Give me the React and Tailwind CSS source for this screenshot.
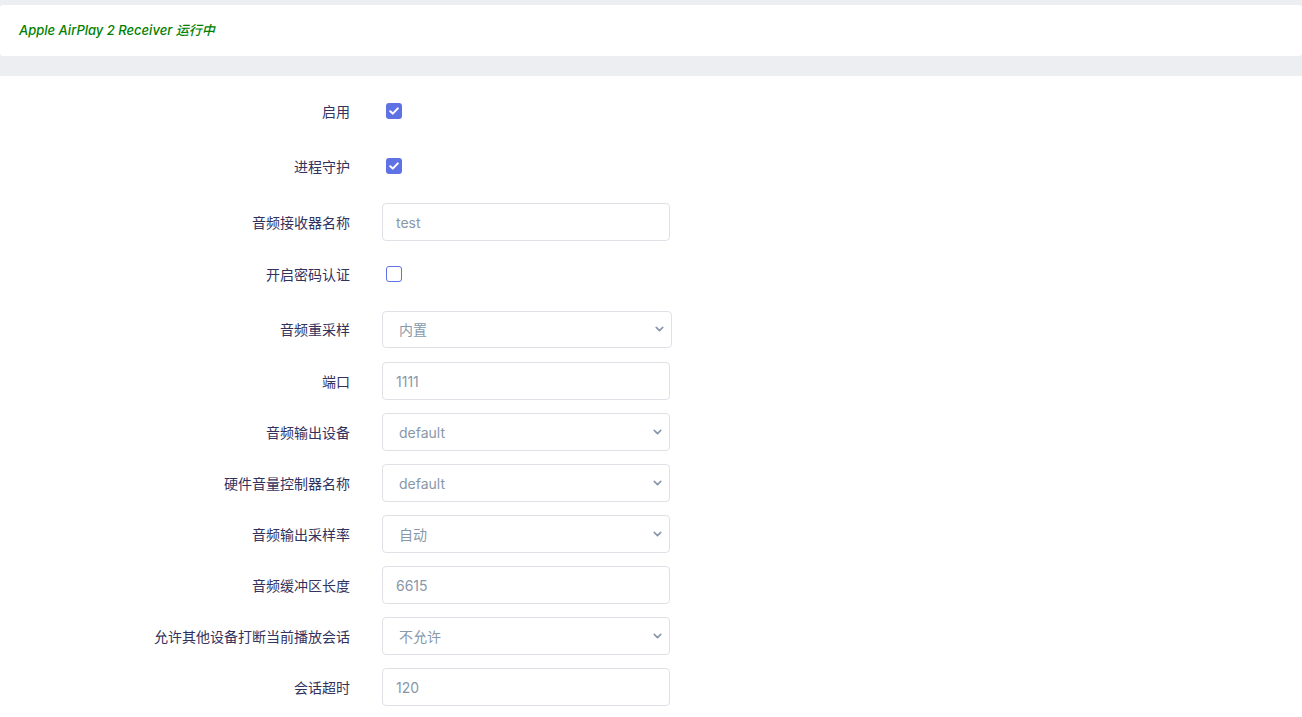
import React from 'react';
import { ChevronDown } from 'lucide-react';

const FONT = { fontFamily: 'Inter, "Noto Sans CJK SC", sans-serif' };

const rows = [
  { label: '启用', type: 'check', checked: true, mt: '' },
  { label: '进程守护', type: 'check', checked: true, mt: 'mt-[17px]' },
  { label: '音频接收器名称', type: 'input', value: 'test', mt: 'mt-[18px]' },
  { label: '开启密码认证', type: 'check', checked: false, mt: 'mt-[14px]' },
  { label: '音频重采样', type: 'select', value: '内置', wide: true, mt: 'mt-[17px]' },
  { label: '端口', type: 'input', value: '1111', mt: 'mt-[14px]' },
  { label: '音频输出设备', type: 'select', value: 'default', mt: 'mt-[13px]' },
  { label: '硬件音量控制器名称', type: 'select', value: 'default', mt: 'mt-[13px]' },
  { label: '音频输出采样率', type: 'select', value: '自动', mt: 'mt-[13px]' },
  { label: '音频缓冲区长度', type: 'input', value: '6615', mt: 'mt-[13px]' },
  { label: '允许其他设备打断当前播放会话', type: 'select', value: '不允许', mt: 'mt-[13px]' },
  { label: '会话超时', type: 'input', value: '120', mt: 'mt-[13px]' },
];

function Checkbox({ checked }) {
  if (checked) {
    return (
      <span className="ml-[4px] flex h-[16px] w-[16px] items-center justify-center rounded-[3px] bg-[#5e72e4]">
        <svg width="10" height="8" viewBox="0 0 10 8" fill="none">
          <path d="M1.2 4.2 L3.8 6.6 L8.8 1.4" stroke="#fff" strokeWidth="2" strokeLinecap="round" strokeLinejoin="round" />
        </svg>
      </span>
    );
  }
  return <span className="ml-[4px] block h-[16px] w-[16px] rounded-[3px] border border-[#5e72e4] bg-white" />;
}

function Control({ row }) {
  if (row.type === 'check') return <Checkbox checked={row.checked} />;
  if (row.type === 'input') {
    return (
      <input
        readOnly
        value={row.value}
        className="h-[38px] w-[288px] rounded-[4px] border border-[#dee2e6] bg-white px-[13px] text-[14px] text-[#8898aa] outline-none"
      />
    );
  }
  return (
    <div className="relative">
      <select
        value={row.value}
        onChange={() => {}}
        className={`${row.wide ? 'w-[290px] h-[37px]' : 'w-[288px] h-[38px]'} appearance-none rounded-[4px] border border-[#dee2e6] bg-white pl-[16px] text-[14px] text-[#8898aa] outline-none`}
      >
        <option>{row.value}</option>
      </select>
      <ChevronDown
        size={13}
        strokeWidth={3}
        className="pointer-events-none absolute right-[6px] top-1/2 -translate-y-1/2 text-[#8898aa]"
      />
    </div>
  );
}

export default function App() {
  return (
    <div className="min-h-screen bg-[#eceef1] pt-[5px]" style={FONT}>
      <div className="flex h-[51px] items-center rounded-[3px] bg-white pl-[19px]">
        <span className="text-[13px] font-medium italic text-[#008000]">Apple AirPlay 2 Receiver 运行中</span>
      </div>
      <div className="mt-[20px] min-h-[641px] bg-white pb-[20px] pt-[16px]">
        {rows.map((row) => (
          <div key={row.label} className={`flex h-[38px] items-center ${row.mt}`}>
            <label className="w-[350px] text-right text-[14px] text-[#32325d]">{row.label}</label>
            <div className="ml-[32px] flex items-center">
              <Control row={row} />
            </div>
          </div>
        ))}
      </div>
    </div>
  );
}
